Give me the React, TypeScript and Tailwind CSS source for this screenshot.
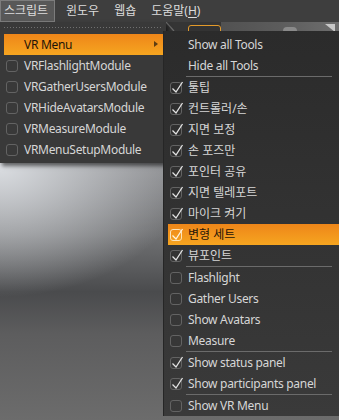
import React from 'react';

type Item = { label: string; on?: boolean; hot?: boolean } | 'sep';

const modules = ['VRFlashlightModule', 'VRGatherUsersModule', 'VRHideAvatarsModule', 'VRMeasureModule', 'VRMenuSetupModule'];

const tools: Item[] = [
    { label: 'Show all Tools' },
    { label: 'Hide all Tools' },
    'sep',
    { label: '툴팁', on: true },
    { label: '컨트롤러/손', on: true },
    { label: '지면 보정', on: true },
    { label: '손 포즈만', on: true },
    { label: '포인터 공유', on: true },
    { label: '지면 텔레포트', on: true },
    { label: '마이크 켜기', on: true },
    { label: '변형 세트', on: true, hot: true },
    { label: '뷰포인트', on: true },
    'sep',
    { label: 'Flashlight' },
    { label: 'Gather Users' },
    { label: 'Show Avatars' },
    { label: 'Measure' },
    'sep',
    { label: 'Show status panel', on: true },
    { label: 'Show participants panel', on: true },
    'sep',
    { label: 'Show VR Menu' },
];

const isLatin = (s: string) => /^[\x20-\x7e]+$/.test(s);

const Check = ({ on, hot }: { on?: boolean; hot?: boolean }) => (
    <span
        className={`relative ml-[2px] mr-[6px] block h-[12px] w-[12px] shrink-0 rounded-[3px] border ${
            hot ? 'border-[#fde3b8]' : 'border-[#636363]'
        }`}
    >
        {on && (
            <svg className="absolute left-0 top-[-2px] h-[14px] w-[14px] overflow-visible" viewBox="0 0 14 14">
                <path d="M1.5 7.5 L5 11 L11.5 1" fill="none" stroke={hot ? '#fff4e0' : '#e4e4e4'} strokeWidth="1.3" />
            </svg>
        )}
    </span>
);

const Row = ({ label, on, hot, box = true }: { label: string; on?: boolean; hot?: boolean; box?: boolean }) => (
    <div
        className={`flex h-[21px] items-center whitespace-nowrap ${isLatin(label) ? 'tracking-[-0.3px]' : ''} ${
            hot ? 'bg-gradient-to-b from-[#ee8619] to-[#f6a520] text-[#1e1408]' : 'text-[#d6d6d6]'
        }`}
    >
        {box ? <Check on={on} hot={hot} /> : <span className="w-[20px] shrink-0" />}
        {label}
    </div>
);

const MenuBar = () => (
    <div className="flex h-[22px] items-stretch gap-[7px] bg-[#3e3e3e] text-[12px] text-[#dcdcdc]">
        <div className="flex w-[55px] items-center border border-[#7c7c7c] bg-[#585858] pl-[3px]">스크립트</div>
        <div className="flex items-center px-[4px]">윈도우</div>
        <div className="flex items-center px-[4px]">웹숍</div>
        <div className="flex items-center px-[4px]">
            도움말(<span className="underline underline-offset-2">H</span>)
        </div>
    </div>
);

const Toolbar = () => (
    <div className="flex h-[10px] overflow-hidden bg-[#353535]">
        <div className="relative w-[188px]">
            <svg className="absolute left-[164px] top-0 h-[10px] w-[16px]" viewBox="0 0 16 10">
                <path d="M2 0 L10 9" stroke="#6a6a6a" strokeWidth="1.2" />
            </svg>
        </div>
        <div className="mt-[3px] h-[16px] w-[33px] rounded-[3px] border border-[#e39a2a] bg-[#333]" />
        <div className="relative flex-1 bg-gradient-to-r from-[#515151] via-[#5c5c5c] to-[#6e6e6e]">
            <div className="absolute left-[62px] top-[5px] h-[8px] w-[14px] rounded-full bg-[#8a8a8a]" />
            <div className="absolute right-[4px] top-[2px] h-0 w-0 border-l-[10px] border-t-[8px] border-l-transparent border-t-[#c8c8c8]" />
        </div>
    </div>
);

export default function App() {
    return (
        <div className="relative h-[420px] w-[339px] overflow-hidden bg-[#3e3e3e] font-['Noto_Sans','Noto_Sans_CJK_KR',sans-serif] text-[12px]">
            <MenuBar />
            <Toolbar />
            <div className="h-[388px] bg-[radial-gradient(ellipse_190px_130px_at_0px_135px,rgba(222,225,229,0.95),rgba(222,225,229,0)),linear-gradient(to_bottom,#8e8f92_0%,#8b8c8f_34%,#717274_52%,#4a4b4d_67%,#5d5d5e_78%,#6c6c6c_100%)]" />

            <div className="absolute left-0 top-[22px] w-[166px] bg-[#393939] pb-[3px] pl-[4px] pr-[3px] shadow-[2px_3px_4px_rgba(0,0,0,0.55)]">
                <div className="mb-[6px] mt-[5px] h-px bg-[repeating-linear-gradient(to_right,#707070_0_1px,transparent_1px_3px)]" />
                <div className="relative flex h-[21px] items-center bg-gradient-to-b from-[#ee8619] to-[#f6a520] pl-[20px] tracking-[-0.3px] text-[#1e1408]">
                    VR Menu
                    <span className="absolute right-[5px] top-[7px] h-0 w-0 border-y-[3.5px] border-l-[4px] border-y-transparent border-l-[#5e3d12]" />
                </div>
                {modules.map((m) => (
                    <Row key={m} label={m} />
                ))}
            </div>

            <div className="absolute left-[163px] top-[31px] w-[176px] border-l border-[#262626] bg-gradient-to-b from-[#2b2b2b] to-[#3a3a3a] pl-[4px] pt-[3px]">
                {tools.map((t, i) =>
                    t === 'sep' ? (
                        <div key={i} className="ml-[18px] mr-[7px] h-px bg-[#6b6b6b]" />
                    ) : (
                        <Row key={i} label={t.label} on={t.on} hot={t.hot} box={i > 2} />
                    )
                )}
            </div>
        </div>
    );
}
